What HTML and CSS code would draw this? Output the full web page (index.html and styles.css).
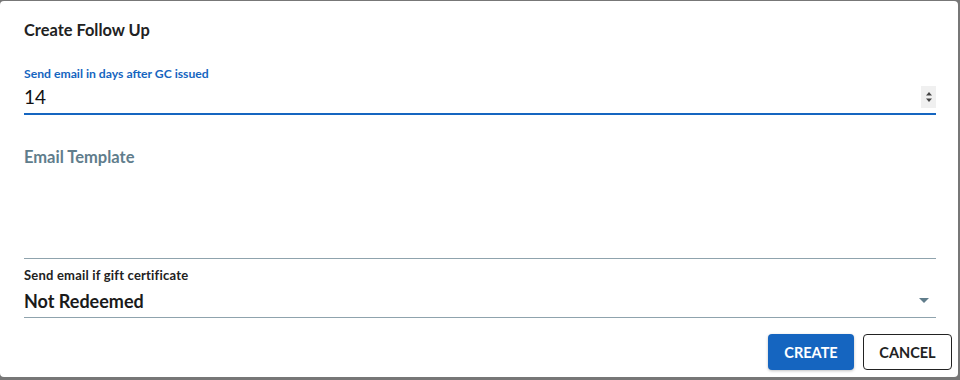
FILE: index.html
```html
<!DOCTYPE html>
<html lang="en">
<head>
    <meta charset="UTF-8">
    <title>Create Follow Up</title>
    <link rel="stylesheet" href="styles.css">
</head>
<body>
    <div class="dialog">
        <h2 class="dialog-title">Create Follow Up</h2>

        <div class="field field-focused">
            <label class="field-label">Send email in days after GC issued</label>
            <div class="field-control">
                <span class="field-value">14</span>
                <span class="spinner">
                    <svg width="8" height="14" viewBox="0 0 8 14">
                        <path d="M4 2 L7 5.5 H1 Z" fill="#444"/>
                        <path d="M4 12 L7 8.5 H1 Z" fill="#444"/>
                    </svg>
                </span>
            </div>
        </div>

        <div class="field field-template">
            <div class="template-label">Email Template</div>
        </div>

        <div class="field field-select">
            <label class="field-label">Send email if gift certificate</label>
            <div class="field-control">
                <span class="field-value select-value">Not Redeemed</span>
                <svg class="caret" width="10" height="5" viewBox="0 0 10 5">
                    <path d="M0 0 H10 L5 5 Z" fill="#607d8b"/>
                </svg>
            </div>
        </div>

        <div class="dialog-actions">
            <button class="btn btn-primary">CREATE</button>
            <button class="btn btn-outline">CANCEL</button>
        </div>
    </div>
</body>
</html>
```

FILE: styles.css
```css
* {
    margin: 0;
    padding: 0;
    box-sizing: border-box;
}

body {
    font-family: 'Lato', 'Noto Sans', sans-serif;
    background-color: #777;
    width: 960px;
    height: 380px;
    overflow: hidden;
}

.dialog {
    margin-top: 1px;
    width: 958px;
    height: 376px;
    background: #fff;
    border-radius: 4px;
    padding: 0 22px 0 24px;
}

.dialog-title {
    padding-top: 19px;
    font-size: 16.4px;
    font-weight: 700;
    color: #222;
    line-height: 20px;
}

.field {
    border-bottom: 1px solid #8fa3ad;
}

.field-focused {
    margin-top: 27px;
    border-bottom: 2px solid #1565c0;
}

.field-label {
    display: block;
    font-size: 12.2px;
    font-weight: 700;
    line-height: 13px;
    color: #222;
}

.field-focused .field-label {
    color: #1565c0;
}

.field-control {
    display: flex;
    align-items: center;
    justify-content: space-between;
    height: 33px;
}

.field-value {
    font-size: 19px;
    color: #111;
}

.select-value {
    font-size: 18px;
    font-weight: 700;
    color: #1a1a1a;
}

.spinner {
    display: flex;
    align-items: center;
    justify-content: center;
    width: 15px;
    height: 22px;
    background: #f0f0f0;
}

.field-template {
    height: 144px;
    padding-top: 32px;
}

.template-label {
    font-size: 16.5px;
    font-weight: 700;
    color: #5f7d8c;
}

.field-select {
    padding-top: 10px;
}

.field-select .field-label {
    font-size: 13px;
    letter-spacing: 0.2px;
}

.field-select .field-control {
    height: 35px;
    padding-top: 2px;
}

.caret {
    margin-right: 7px;
}

.dialog-actions {
    display: flex;
    justify-content: flex-end;
    gap: 9px;
    margin-top: 16px;
    margin-right: -16px;
}

.btn {
    font-family: 'Lato', 'Noto Sans', sans-serif;
    font-size: 14.5px;
    font-weight: 700;
    height: 36px;
    border-radius: 4px;
    cursor: pointer;
}

.btn-primary {
    width: 86px;
    background-color: #1565c0;
    color: #fff;
    border: none;
    box-shadow: 0 1px 3px rgba(0, 0, 0, 0.25);
}

.btn-outline {
    width: 89px;
    background: #fff;
    color: #222;
    border: 1px solid #222;
}
```
